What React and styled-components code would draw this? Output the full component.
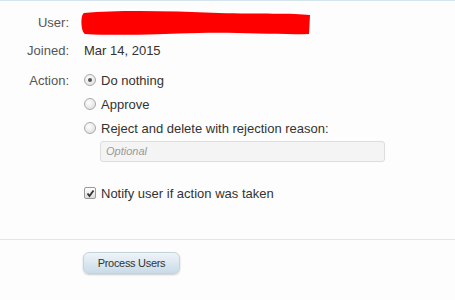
import React from "react";
import styled, { createGlobalStyle } from "styled-components";

const GlobalStyle = createGlobalStyle`
  body {
    margin: 0;
    background: #fdfdfd;
    font-family: "Liberation Sans", Arial, sans-serif;
    font-size: 13px;
    color: #333;
  }
`

const Page = styled.div`
  width: 455px;
  height: 300px;
  border-top: 1px solid #d4e4ec;
  box-sizing: border-box;
  overflow: hidden;
`

const Form = styled.div`
  display: grid;
  grid-template-columns: 69px 1fr;
  column-gap: 15px;
  padding-top: 6px;
`

const Label = styled.div`
  text-align: right;
  color: #555;
  line-height: 16px;
  padding-top: ${(p) => p.$top || 0}px;
`

const Value = styled.div`
  line-height: 16px;
  padding-top: ${(p) => p.$top || 0}px;
`

const Redaction = styled.svg`
  display: block;
  margin-top: 3px;
  margin-left: -5px;
`

const Options = styled.div`
  display: flex;
  flex-direction: column;
  gap: 8px;
  padding-top: 14px;
`

const Choice = styled.label`
  display: flex;
  align-items: center;
  gap: 5px;
  line-height: 16px;
  color: #333;
`

const Radio = styled.span`
  width: 10px;
  height: 10px;
  border-radius: 50%;
  border: 1px solid #aaa;
  background: radial-gradient(circle at 40% 35%, #ffffff, #d6d8da);
  display: flex;
  align-items: center;
  justify-content: center;
  margin-top: -2px;
  &::after {
    content: "";
    width: 4px;
    height: 4px;
    border-radius: 50%;
    background: ${(p) => (p.$checked ? "#555" : "transparent")};
  }
`

const Check = styled.span`
  width: 10px;
  height: 10px;
  border: 1px solid #999;
  border-radius: 2px;
  background: linear-gradient(#fff, #ddd);
  display: flex;
  align-items: center;
  justify-content: center;
  margin-top: -2px;
`

const ReasonInput = styled.div`
  margin-left: 16px;
  width: 278px;
  height: 19px;
  border: 1px solid #ddd;
  border-radius: 3px;
  background: #f4f4f4;
  color: #999;
  font-style: italic;
  font-size: 11px;
  line-height: 19px;
  padding-left: 5px;
  box-sizing: content-box;
  margin-top: -4px;
`

const Notify = styled.div`
  margin-top: 16px;
`

const Divider = styled.div`
  height: 1px;
  background: #e3e6ea;
  margin-top: 37px;
`

const Footer = styled.div`
  padding: 12px 0 0 83px;
`

const Button = styled.button`
  width: 97px;
  height: 22px;
  border: 1px solid #c5d3dd;
  border-radius: 6px;
  background: linear-gradient(#eef4f8, #c9dbe8);
  box-shadow: 0 1px 2px rgba(0, 0, 0, 0.2);
  font-family: "Liberation Sans", Arial, sans-serif;
  font-size: 11px;
  color: #333;
  letter-spacing: -0.3px;
  padding: 0;
`

const App = () => {
  return (
    <>
      <GlobalStyle />
      <Page>
        <Form>
          <Label $top={8}>User:</Label>
          <Value>
            <Redaction width="233" height="26" viewBox="0 0 233 26">
              <path
                d="M5 3 C40 0 90 1 140 3 C180 4 215 3 231 5 L230 24 C200 25 160 22 120 23 C80 24 40 26 6 24 C2 22 1 5 5 3 Z"
                fill="#ff0000"
              />
            </Redaction>
          </Value>

          <Label $top={7}>Joined:</Label>
          <Value $top={7}>Mar 14, 2015</Value>

          <Label $top={14}>Action:</Label>
          <Options>
            <Choice><Radio $checked />Do nothing</Choice>
            <Choice><Radio />Approve</Choice>
            <Choice><Radio />Reject and delete with rejection reason:</Choice>
            <ReasonInput>Optional</ReasonInput>
            <Notify>
              <Choice>
                <Check>
                  <svg width="9" height="9" viewBox="0 0 9 9">
                    <path d="M1.5 4.5 L3.5 7 L7.5 1.5" stroke="#333" strokeWidth="1.8" fill="none" />
                  </svg>
                </Check>
                Notify user if action was taken
              </Choice>
            </Notify>
          </Options>
        </Form>
        <Divider />
        <Footer>
          <Button>Process Users</Button>
        </Footer>
      </Page>
    </>
  )
}

export default App
